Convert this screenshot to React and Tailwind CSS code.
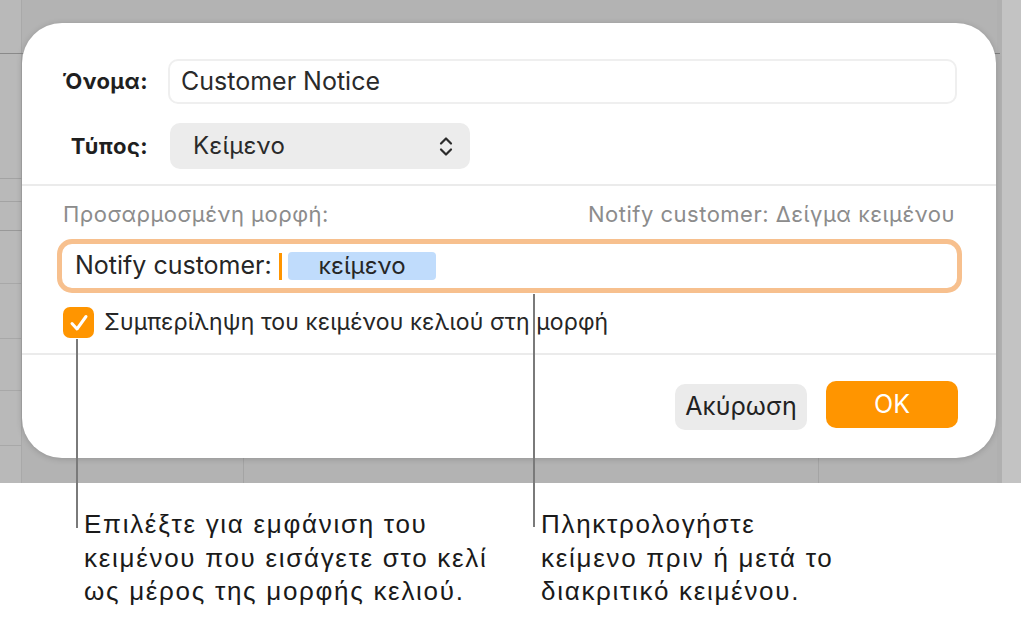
import React from "react";

export default function App() {
  return (
    <div className="relative w-[1021px] h-[622px] overflow-hidden bg-white font-['Inter','Noto_Sans',sans-serif] text-[#262626]">
      {/* spreadsheet background, dimmed */}
      <div className="relative h-[483px] bg-[#b3b3b3] pt-[23px] pl-[22px]">
        <div className="absolute inset-0">
          <div className="absolute left-0 top-0 w-[22px] h-full bg-[#b9b9b9] border-r border-[#a9a9a9]" />
          <div className="absolute left-0 top-[53px] w-[26px] h-px bg-[#8a8a8a]" />
          <div className="absolute left-0 top-[178px] w-[22px] h-px bg-[#a3a3a3]" />
          <div className="absolute left-0 top-[201px] w-[22px] h-px bg-[#a3a3a3]" />
          <div className="absolute left-0 top-[230px] w-[22px] h-px bg-[#999999]" />
          <div className="absolute left-0 top-[283px] w-[22px] h-px bg-[#a8a8a8]" />
          <div className="absolute left-0 top-[338px] w-[22px] h-px bg-[#a8a8a8]" />
          <div className="absolute left-0 top-[390px] w-[22px] h-px bg-[#a8a8a8]" />
          <div className="absolute left-0 top-[445px] w-[22px] h-px bg-[#a8a8a8]" />
          <div className="absolute right-0 top-0 w-[24px] h-full bg-[#c3c3c3] border-l-[5px] border-[#b0b0b0]" />
          <div className="absolute left-[990px] top-[53px] w-[10px] h-px bg-[#7d7d7d]" />
          <div className="absolute left-[243px] top-[455px] w-px h-[28px] bg-[#a4a4a4]" />
          <div className="absolute left-[818px] top-[455px] w-px h-[28px] bg-[#a4a4a4]" />
        </div>

        {/* dialog */}
        <div className="relative w-[974px] h-[435px] bg-white rounded-[40px] shadow-[0_1px_6px_rgba(0,0,0,0.18)] flex flex-col">
          <div className="pt-[36px] flex items-center">
            <div className="w-[126px] text-right font-bold text-[22px] tracking-[0.4px] text-[#1f1f1f]">Όνομα:</div>
            <div className="ml-[20px] mr-[39px] flex-1 h-[45px] border-2 border-[#efefef] rounded-[10px] pl-[11px] flex items-center text-[25px] text-[#2a2a2a]">
              Customer Notice
            </div>
          </div>
          <div className="mt-[19px] flex items-center">
            <div className="w-[126px] text-right font-bold text-[22px] tracking-[0.4px] text-[#1f1f1f]">Τύπος:</div>
            <div className="ml-[22px] w-[300px] h-[46px] bg-[#ececec] rounded-[10px] pl-[23px] pr-[17px] flex items-center justify-between text-[24px] tracking-[0.2px] text-[#2a2a2a]">
              <span>Κείμενο</span>
              <svg width="14" height="21" viewBox="0 0 14 21" fill="none" stroke="#2b2b2b" strokeWidth="2.2" strokeLinecap="round" strokeLinejoin="round">
                <path d="M2 7.5 L7 2.5 L12 7.5" />
                <path d="M2 13.5 L7 18.5 L12 13.5" />
              </svg>
            </div>
          </div>
          <div className="mt-[15px] h-[2px] bg-[#ebebeb]" />

          <div className="mt-[17px] px-[41px] flex justify-between text-[22px] tracking-[0.5px] leading-[22px] text-[#8c8c8c] whitespace-nowrap">
            <span>Προσαρμοσμένη μορφή:</span>
            <span>Notify customer: Δείγμα κειμένου</span>
          </div>
          <div className="mt-[14px] ml-[35px] mr-[34px] h-[54px] border-[5px] border-[#f7c08e] rounded-[15px] pl-[13px] flex items-center text-[25px] text-[#262626]">
            <span className="w-[204px] whitespace-nowrap">Notify customer:</span>
            <span className="w-[3px] h-[27px] bg-[#ff9500]" />
            <span className="ml-[6px] w-[148px] h-[28px] rounded-[4px] bg-[#c0dcfc] flex items-center justify-center text-[24px]">κείμενο</span>
          </div>
          <div className="mt-[14px] ml-[41px] h-[31px] flex items-center gap-[10px]">
            <div className="w-[31px] h-[31px] rounded-[7px] bg-[#ff9500] flex items-center justify-center">
              <svg width="24" height="24" viewBox="0 0 24 24" fill="none" stroke="white" strokeWidth="3" strokeLinecap="round" strokeLinejoin="round">
                <path d="M5 12.5 L10 18 L19 5.5" />
              </svg>
            </div>
            <span className="text-[23px] leading-[31px] tracking-[0.1px] text-[#262626] whitespace-nowrap">Συμπερίληψη του κειμένου κελιού στη μορφή</span>
          </div>
          <div className="mt-[15px] h-[2px] bg-[#ebebeb]" />

          <div className="mt-[26px] pr-[38px] flex justify-end items-start gap-[19px]">
            <div className="mt-[3px] w-[132px] h-[46px] rounded-[10px] bg-[#ebebeb] flex items-center justify-center text-[25px] text-[#222222]">
              Ακύρωση
            </div>
            <div className="w-[132px] h-[47px] rounded-[10px] bg-[#ff9500] flex items-center justify-center text-[25px] text-white">
              OK
            </div>
          </div>
        </div>
      </div>

      {/* callout text */}
      <div className="flex pt-[25px] font-['Liberation_Sans','Noto_Sans',sans-serif] text-[26px] tracking-[1.7px] leading-[33.5px] text-[#1a1a1a]">
        <div className="ml-[84px] w-[457px] whitespace-nowrap">
          Επιλέξτε για εμφάνιση του<br />
          κειμένου που εισάγετε στο κελί<br />
          ως μέρος της μορφής κελιού.
        </div>
        <div className="whitespace-nowrap">
          Πληκτρολογήστε<br />
          κείμενο πριν ή μετά το<br />
          διακριτικό κειμένου.
        </div>
      </div>

      {/* callout lines */}
      <div className="absolute left-[76px] top-[339px] w-[2px] h-[189px] bg-[#7a7a7a]" />
      <div className="absolute left-[533px] top-[294px] w-[2px] h-[233px] bg-[#7a7a7a]" />
    </div>
  );
}
